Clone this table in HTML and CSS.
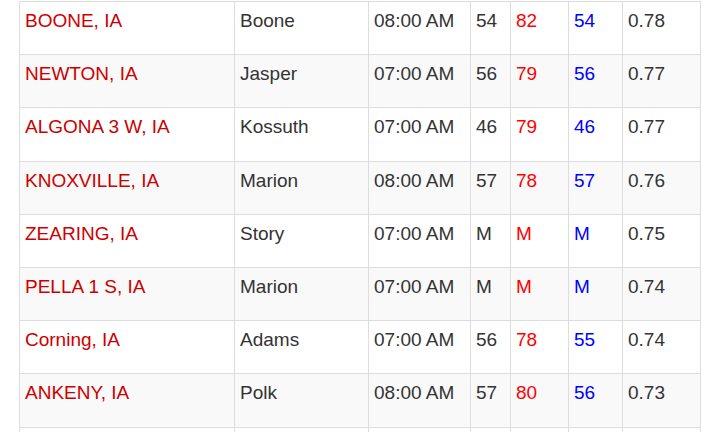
FILE: index.html
```html
<!DOCTYPE html>
<html>
<head>
<meta charset="utf-8">
<link rel="stylesheet" href="styles.css">
</head>
<body>
<div class="wrap">
<table class="obs">
  <colgroup>
    <col class="c-station"><col class="c-county"><col class="c-time"><col class="c-t"><col class="c-max"><col class="c-min"><col class="c-pcp">
  </colgroup>
  <tbody>
    <tr><td class="stn">BOONE, IA</td><td>Boone</td><td>08:00 AM</td><td>54</td><td class="hi">82</td><td class="lo">54</td><td>0.78</td></tr>
    <tr><td class="stn">NEWTON, IA</td><td>Jasper</td><td>07:00 AM</td><td>56</td><td class="hi">79</td><td class="lo">56</td><td>0.77</td></tr>
    <tr><td class="stn">ALGONA 3 W, IA</td><td>Kossuth</td><td>07:00 AM</td><td>46</td><td class="hi">79</td><td class="lo">46</td><td>0.77</td></tr>
    <tr><td class="stn">KNOXVILLE, IA</td><td>Marion</td><td>08:00 AM</td><td>57</td><td class="hi">78</td><td class="lo">57</td><td>0.76</td></tr>
    <tr><td class="stn">ZEARING, IA</td><td>Story</td><td>07:00 AM</td><td>M</td><td class="hi">M</td><td class="lo">M</td><td>0.75</td></tr>
    <tr><td class="stn">PELLA 1 S, IA</td><td>Marion</td><td>07:00 AM</td><td>M</td><td class="hi">M</td><td class="lo">M</td><td>0.74</td></tr>
    <tr><td class="stn">Corning, IA</td><td>Adams</td><td>07:00 AM</td><td>56</td><td class="hi">78</td><td class="lo">55</td><td>0.74</td></tr>
    <tr><td class="stn">ANKENY, IA</td><td>Polk</td><td>08:00 AM</td><td>57</td><td class="hi">80</td><td class="lo">56</td><td>0.73</td></tr>
    <tr><td></td><td></td><td></td><td></td><td></td><td></td><td></td></tr>
  </tbody>
</table>
</div>
</body>
</html>
```
FILE: styles.css
```css
html, body {
  margin: 0;
  padding: 0;
  background: #fff;
}
body {
  font-family: "Liberation Sans", Arial, Helvetica, sans-serif;
  font-size: 19px;
  color: #333;
}
.wrap {
  padding: 1px 0 0 19px;
  height: 432px;
  box-sizing: border-box;
  overflow: hidden;
}
.obs {
  border-collapse: collapse;
  table-layout: fixed;
  width: 682px;
}
.c-station { width: 215px; }
.c-county { width: 134px; }
.c-time { width: 102px; }
.c-t { width: 40px; }
.c-max { width: 58px; }
.c-min { width: 54px; }
.c-pcp { width: 78px; }
.obs td {
  border: 1px solid #ddd;
  height: 53.2px;
  box-sizing: border-box;
  padding: 5px 5px 0 5px;
  vertical-align: top;
  line-height: 27px;
  white-space: nowrap;
}
.obs tr:nth-child(even) td {
  background: #f9f9f9;
}
.stn { color: #cc0000; }
.hi { color: #ff0000; }
.lo { color: #0000ff; }
```
